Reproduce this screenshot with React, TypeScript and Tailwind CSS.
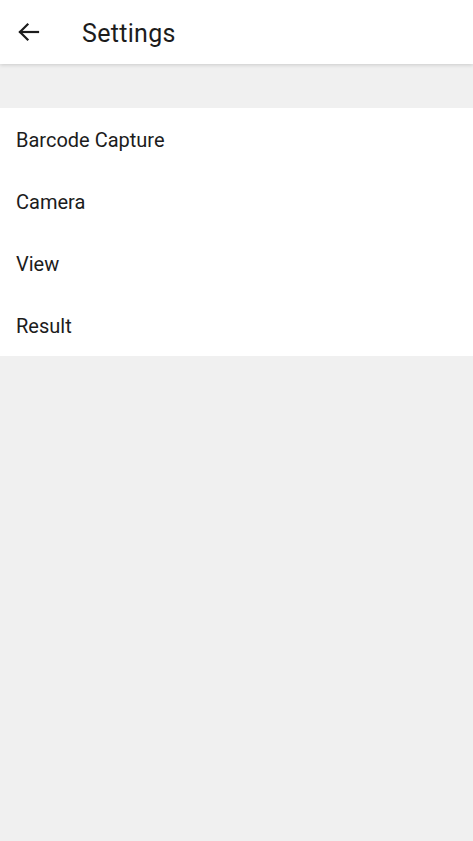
const items = ['Barcode Capture', 'Camera', 'View', 'Result'];

export default function App() {
  return (
    <div className="min-h-[841px] bg-[#f0f0f0] font-['Roboto',sans-serif] text-[#1c1c1c]">
      <header className="relative z-10 flex h-16 items-center bg-white shadow-[0_1px_4px_rgba(0,0,0,0.16)]">
        <button type="button" className="ml-[13px] flex h-[30px] w-[30px] items-center justify-center">
          <svg viewBox="0 0 30 30" width="30" height="30" fill="none" stroke="currentColor" strokeWidth="2.2" strokeLinecap="square">
            <path d="M25 15H7" />
            <path d="M14.5 7.5L7 15l7.5 7.5" />
          </svg>
        </button>
        <h1 className="ml-[39px] pt-[2px] text-[25px] leading-none tracking-[0.3px]">Settings</h1>
      </header>
      <div className="h-11" />
      <ul className="bg-white">
        {items.map((item) => (
          <li key={item} className="flex h-[62px] items-center px-4 pt-[2px] text-[20px]">
            {item}
          </li>
        ))}
      </ul>
    </div>
  );
}
